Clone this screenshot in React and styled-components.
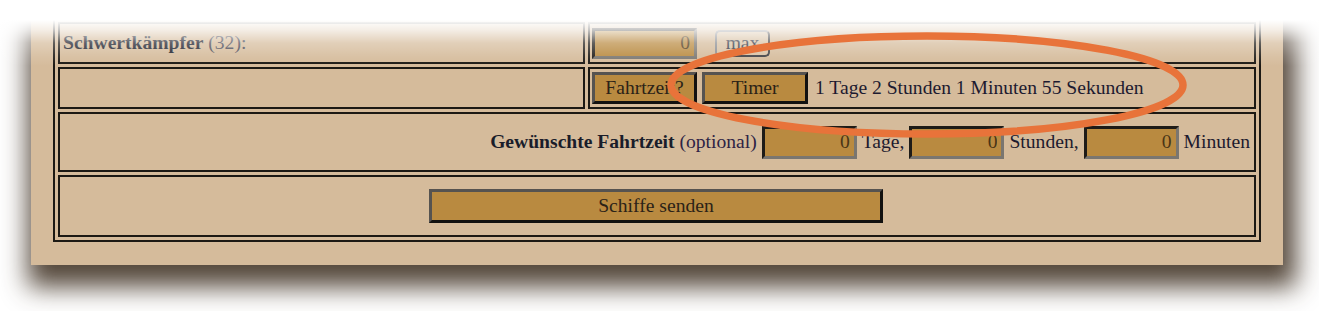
import React from 'react';
import styled, { createGlobalStyle } from 'styled-components';

const GlobalStyle = createGlobalStyle`
  html, body {
    margin: 0;
    padding: 0;
    background: #fff;
  }
  body {
    font-family: 'Liberation Serif', 'Times New Roman', serif;
  }
`;

const Stage = styled.div`
  position: relative;
  width: 1319px;
  height: 311px;
  overflow: hidden;
  padding-left: 31px;
  box-sizing: border-box;
`;

const Panel = styled.div`
  width: 1252px;
  box-sizing: border-box;
  padding: 17px 22px 23px;
  background: #d5bb9b;
  box-shadow: 5px 14px 24px 8px rgba(55, 40, 25, 0.85);
`;

const Table = styled.div`
  display: grid;
  grid-template-columns: 527px 1fr;
  gap: 3px;
  padding: 3px;
  border: 2px solid #1c1914;
`;

const Cell = styled.div`
  grid-column: ${(p) => (p.$span ? '1 / -1' : 'auto')};
  height: ${(p) => p.$h}px;
  box-sizing: border-box;
  border: 2px solid #1c1914;
  display: flex;
  align-items: center;
  justify-content: ${(p) => p.$justify || 'flex-start'};
  gap: 5px;
  padding: 0 4px 0 ${(p) => p.$pl ?? 2}px;
  font-size: 19.6px;
  color: #1d1a2e;
  white-space: nowrap;
`;

const Label = styled.span`
  font-weight: bold;
  color: #1a1d2a;
`;

const Muted = styled.span`
  font-weight: normal;
  color: ${(p) => p.$color || '#2e2345'};
`;

const NumberInput = styled.input`
  width: ${(p) => p.$w}px;
  height: ${(p) => p.$h}px;
  box-sizing: border-box;
  margin: 0;
  padding: 0 4px;
  background: #b98a40;
  border: 3px solid;
  border-color: #1e1b17 #7a7670 #7a7670 #1e1b17;
  text-align: right;
  font-family: inherit;
  font-size: 19.6px;
  color: #4a3516;
  outline: none;
`;

const GoldButton = styled.button`
  width: ${(p) => p.$w}px;
  height: ${(p) => p.$h}px;
  box-sizing: border-box;
  margin: 0;
  padding: 0;
  background: #b98a40;
  border: 3px solid;
  border-color: #565350 #121110 #121110 #565350;
  font-family: inherit;
  font-size: 19.6px;
  color: #2b2217;
  cursor: pointer;
`;

const MaxButton = styled.button`
  width: 55px;
  height: 27px;
  margin: 0 0 0 13px;
  padding: 0 0 2px;
  box-sizing: border-box;
  background: #d8c1a3;
  border: 2px solid;
  border-color: #8a8c90 #3d3d40 #3d3d40 #8a8c90;
  border-radius: 5px;
  font-family: inherit;
  font-size: 19.6px;
  color: #333846;
  cursor: pointer;
`;

const Countdown = styled.span`
  margin-left: 2px;
  color: #1d1a30;
`;

const Fade = styled.div`
  position: absolute;
  top: 0;
  left: 0;
  right: 0;
  height: 70px;
  pointer-events: none;
  background: linear-gradient(
    to bottom,
    #fff 0,
    #fff 20px,
    rgba(255, 255, 255, 0.75) 30px,
    rgba(255, 255, 255, 0.3) 43px,
    rgba(255, 255, 255, 0.12) 55px,
    rgba(255, 255, 255, 0) 66px
  );
`;

const Annotation = styled.svg`
  position: absolute;
  top: 0;
  left: 0;
  pointer-events: none;
`;

export default function App() {
  return (
    <>
      <GlobalStyle />
      <Stage>
        <Panel>
          <Table>
            <Cell $h={42} $pl={3}>
              <span>
                <Label>Schwertkämpfer</Label>
                <Muted $color="#4a4a56"> (32):</Muted>
              </span>
            </Cell>
            <Cell $h={42}>
              <NumberInput $w={105} $h={31} defaultValue="0" readOnly />
              <MaxButton>max</MaxButton>
            </Cell>

            <Cell $h={42} />
            <Cell $h={42}>
              <GoldButton $w={105} $h={32}>Fahrtzeit?</GoldButton>
              <GoldButton $w={106} $h={32}>Timer</GoldButton>
              <Countdown>1 Tage 2 Stunden 1 Minuten 55 Sekunden</Countdown>
            </Cell>

            <Cell $span $h={60} $justify="flex-end">
              <span>
                <Label>Gewünschte Fahrtzeit</Label>
                <Muted> (optional)</Muted>
              </span>
              <NumberInput $w={95} $h={33} defaultValue="0" readOnly />
              <span>Tage,</span>
              <NumberInput $w={95} $h={33} defaultValue="0" readOnly />
              <span>Stunden,</span>
              <NumberInput $w={95} $h={33} defaultValue="0" readOnly />
              <span>Minuten</span>
            </Cell>

            <Cell $span $h={62} $justify="center">
              <GoldButton $w={454} $h={34}>Schiffe senden</GoldButton>
            </Cell>
          </Table>
        </Panel>
        <Fade />
        <Annotation width="1319" height="311">
          <ellipse cx="927" cy="85" rx="256" ry="49" fill="none" stroke="#e8733a" strokeWidth="7.5" />
        </Annotation>
      </Stage>
    </>
  );
}
